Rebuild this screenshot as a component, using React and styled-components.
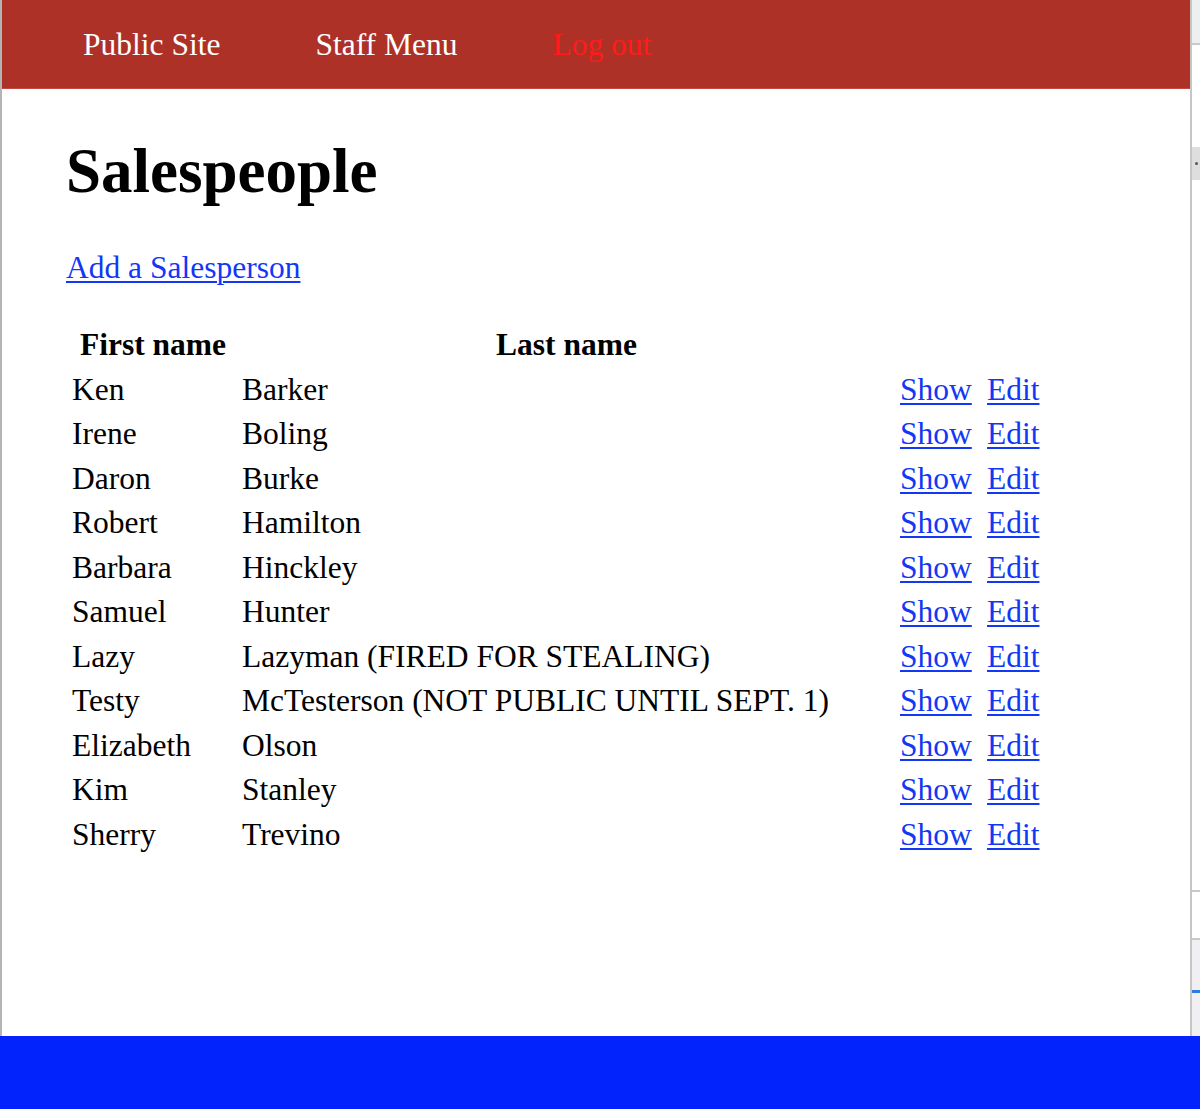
import React from 'react';
import styled, { createGlobalStyle } from 'styled-components';

const GlobalStyle = createGlobalStyle`
  html, body {
    margin: 0;
    padding: 0;
    background: #fff;
  }
  body {
    font-family: "Liberation Serif", "Times New Roman", serif;
    font-size: 31.5px;
    color: #000;
  }
`;

const Screen = styled.div`
  width: 1200px;
  height: 1109px;
  display: flex;
  flex-direction: column;
  overflow: hidden;
`;

const Desk = styled.div`
  display: flex;
  height: 1036px;
`;

const Page = styled.div`
  width: 1192px;
  box-sizing: border-box;
  border-left: 2px solid #b4b4b4;
  border-right: 2px solid #c6c6c6;
  background: #fff;
`;

const Header = styled.nav`
  height: 89px;
  border-bottom: 1px solid #c4483e;
  background: #ae3127;
  display: flex;
  align-items: center;
  gap: 95px;
  padding-left: 81px;
  box-sizing: border-box;
`;

const NavLink = styled.a`
  color: ${(p) => (p.$danger ? '#ff1b1b' : '#fff')};
  text-decoration: none;
  font-size: 31.5px;
  line-height: 37px;
  cursor: pointer;
`;

const Main = styled.main`
  padding-left: 64px;
`;

const Title = styled.h1`
  margin: 45px 0 0;
  font-size: 63px;
  line-height: 74px;
  font-weight: bold;
`;

const Para = styled.p`
  margin: 41px 0 0;
  line-height: 37px;
`;

const Link = styled.a`
  color: #1238f5;
  text-decoration: underline;
  text-decoration-thickness: 2px;
  text-underline-offset: 3px;
  cursor: pointer;
`;

const Table = styled.div`
  margin: 39px 0 0 4px;
  display: grid;
  grid-template-columns: 166px 653px 84px 60px;
  column-gap: 4px;
  row-gap: 4px;
  grid-auto-rows: 40.5px;
`;

const Th = styled.div`
  padding: 0 2px;
  line-height: 40.5px;
  font-weight: bold;
  text-align: center;
`;

const Td = styled.div`
  padding: 0 ${(p) => (p.$pad ? p.$pad : 2)}px;
  line-height: 40.5px;
  white-space: nowrap;
`;

const Side = styled.div`
  flex: 1;
  display: flex;
  flex-direction: column;
  background: #fff;
`;

const SideTop = styled.div`
  height: 43px;
  background: #eeeff1;
  border-bottom: 2px solid #c9c9c9;
`;

const SideChip = styled.div`
  margin-top: 102px;
  height: 33px;
  background: #dedede;
  position: relative;
  &::before {
    content: '';
    position: absolute;
    left: 3px;
    top: 15px;
    width: 3px;
    height: 3px;
    border-radius: 50%;
    background: #555;
  }
`;

const SideRule = styled.div`
  margin-top: ${(p) => p.$top}px;
  border-top: 2px solid #c9c9c9;
`;

const SidePanel = styled.div`
  flex: 1;
  background: #f0f0f2;
  padding-top: 50px;
`;

const SideMark = styled.div`
  height: 3px;
  background: #2c7be0;
`;

const Footer = styled.div`
  height: 73px;
  background: #0223fb;
`;

const people = [
  ['Ken', 'Barker'],
  ['Irene', 'Boling'],
  ['Daron', 'Burke'],
  ['Robert', 'Hamilton'],
  ['Barbara', 'Hinckley'],
  ['Samuel', 'Hunter'],
  ['Lazy', 'Lazyman (FIRED FOR STEALING)'],
  ['Testy', 'McTesterson (NOT PUBLIC UNTIL SEPT. 1)'],
  ['Elizabeth', 'Olson'],
  ['Kim', 'Stanley'],
  ['Sherry', 'Trevino'],
];

const App = () => {
  return (
    <Screen>
      <GlobalStyle />
      <Desk>
        <Page>
          <Header>
            <NavLink>Public Site</NavLink>
            <NavLink>Staff Menu</NavLink>
            <NavLink $danger>Log out</NavLink>
          </Header>

          <Main>
            <Title>Salespeople</Title>
            <Para>
              <Link>Add a Salesperson</Link>
            </Para>

            <Table>
              <Th>First name</Th>
              <Th>Last name</Th>
              <Th />
              <Th />
              {people.map(([first, last]) => (
                <React.Fragment key={first}>
                  <Td>{first}</Td>
                  <Td>{last}</Td>
                  <Td $pad={3}>
                    <Link>Show</Link>
                  </Td>
                  <Td>
                    <Link>Edit</Link>
                  </Td>
                </React.Fragment>
              ))}
            </Table>
          </Main>
        </Page>

        <Side>
          <SideTop />
          <SideChip />
          <SideRule $top={710} />
          <SideRule $top={46} />
          <SidePanel>
            <SideMark />
          </SidePanel>
        </Side>
      </Desk>
      <Footer />
    </Screen>
  );
};

export default App;
